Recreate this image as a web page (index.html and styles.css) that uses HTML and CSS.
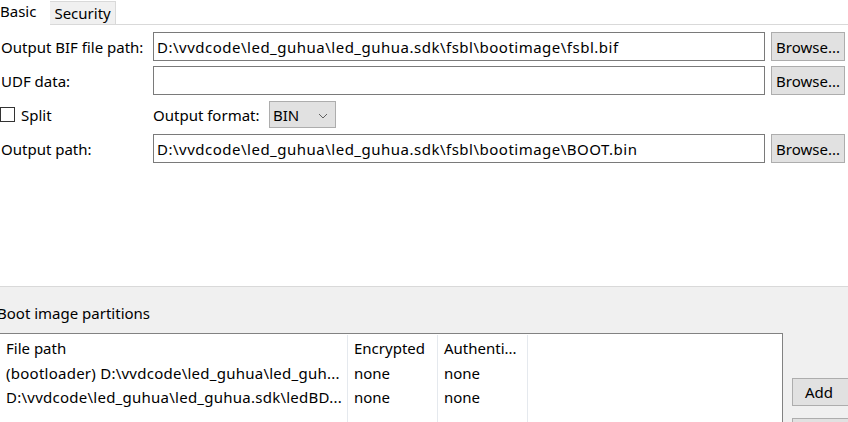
FILE: index.html
```html
<!DOCTYPE html>
<html>
<head>
<meta charset="utf-8">
<link rel="stylesheet" href="styles.css">
</head>
<body>
<div class="tabs">
  <div class="tab active">Basic</div>
  <div class="tab">Security</div>
</div>
<div class="panel">
  <div class="form">
    <div class="label">Output BIF file path:</div>
    <div class="input">D:\vvdcode\led_guhua\led_guhua.sdk\fsbl\bootimage\fsbl.bif</div>
    <div class="btn">Browse...</div>

    <div class="label">UDF data:</div>
    <div class="input"></div>
    <div class="btn">Browse...</div>

    <div class="label check"><span class="box"></span>Split</div>
    <div class="fmt"><span class="flabel">Output format:</span><span class="select">BIN<svg class="chev" width="10" height="6" viewBox="0 0 10 6"><path d="M1 1 L5 5 L9 1" fill="none" stroke="#606060" stroke-width="1"/></svg></span></div>
    <div></div>

    <div class="label">Output path:</div>
    <div class="input">D:\vvdcode\led_guhua\led_guhua.sdk\fsbl\bootimage\BOOT.bin</div>
    <div class="btn">Browse...</div>
  </div>
</div>
<div class="lower">
  <div class="group">Boot image partitions</div>
  <div class="bottom">
    <div class="table">
      <div class="row head">
        <div class="c c1">File path</div>
        <div class="c c2">Encrypted</div>
        <div class="c c3">Authenti...</div>
      </div>
      <div class="row">
        <div class="c c1 path">(bootloader) D:\vvdcode\led_guhua\led_guh...</div>
        <div class="c c2">none</div>
        <div class="c c3">none</div>
      </div>
      <div class="row">
        <div class="c c1 path">D:\vvdcode\led_guhua\led_guhua.sdk\ledBD...</div>
        <div class="c c2">none</div>
        <div class="c c3">none</div>
      </div>
      <div class="row filler">
        <div class="c c1"></div>
        <div class="c c2"></div>
        <div class="c c3"></div>
      </div>
    </div>
    <div class="side">
      <div class="sbtn">Add</div>
      <div class="sbtn"></div>
    </div>
  </div>
</div>
</body>
</html>
```

FILE: styles.css
```css
html, body {
  margin: 0;
  padding: 0;
  width: 848px;
  height: 422px;
  overflow: hidden;
  background: #ffffff;
  font-family: "Noto Sans", "Open Sans", sans-serif;
  font-size: 15px;
  color: #000;
}

.tabs {
  height: 24px;
  border-bottom: 1px solid #d9d9d9;
  display: flex;
  align-items: flex-end;
  background: #ffffff;
}

.tab {
  height: 22px;
  line-height: 22px;
  padding: 0 4px 0 4px;
  background: #f0f0f0;
  border: 1px solid #d9d9d9;
  border-bottom: none;
  margin-left: -1px;
}

.tab.active {
  background: #ffffff;
  height: 25px;
  line-height: 22px;
  margin-bottom: -1px;
  margin-left: -2px;
  padding: 0 13px 0 1px;
  border-color: #ffffff;
  position: relative;
}

.panel {
  height: 261px;
  padding-top: 7px;
  box-sizing: border-box;
  background: #ffffff;
}

.form {
  display: grid;
  grid-template-columns: 147px 612px 74px;
  grid-auto-rows: 29px;
  column-gap: 6px;
  row-gap: 5px;
}

.label {
  display: flex;
  align-items: center;
  padding-left: 1px;
  white-space: nowrap;
}

.check .box {
  width: 13px;
  height: 13px;
  border: 1px solid #333;
  background: #fff;
  margin-left: -1px;
  margin-right: 6px;
}

.input {
  border: 1px solid #7a7a7a;
  background: #fff;
  display: flex;
  align-items: center;
  padding-left: 3px;
  white-space: nowrap;
  overflow: hidden;
  letter-spacing: 0.5px;
}

.btn {
  border: 1px solid #adadad;
  background: #e1e1e1;
  display: flex;
  align-items: center;
  justify-content: center;
}

.fmt {
  display: flex;
  align-items: center;
}

.flabel {
  width: 116px;
}

.select {
  width: 67px;
  height: 27px;
  box-sizing: border-box;
  border: 1px solid #adadad;
  background: #e1e1e1;
  display: flex;
  align-items: center;
  padding-left: 3px;
  position: relative;
}

.chev {
  position: absolute;
  right: 7px;
  top: 11px;
}

.lower {
  height: 136px;
  background: #f0f0f0;
  border-top: 1px solid #d9d9d9;
}

.group {
  height: 46px;
  line-height: 52px;
  margin-left: -3px;
}

.bottom {
  display: flex;
  align-items: flex-start;
}

.table {
  flex: 0 0 auto;
  width: 784px;
  height: 100px;
  margin-left: -1px;
  box-sizing: border-box;
  border: 1px solid #828282;
  background: #ffffff;
  padding-top: 1px;
  display: flex;
  flex-direction: column;
}

.row {
  display: flex;
  height: 24px;
}

.row.head {
  height: 26px;
}

.row.filler {
  flex: 1;
}

.c {
  box-sizing: border-box;
  padding-left: 6px;
  white-space: nowrap;
  overflow: hidden;
  display: flex;
  align-items: center;
  border-right: 1px solid #e5e9ee;
}

.c.path {
  letter-spacing: 0.25px;
}

.c1 { width: 348px; }
.c2 { width: 90px; }
.c3 { width: 90px; }

.side {
  flex: 0 0 auto;
  display: flex;
  flex-direction: column;
  gap: 12px;
  margin-left: 9px;
  padding-top: 45px;
}

.sbtn {
  width: 70px;
  height: 28px;
  box-sizing: border-box;
  border: 1px solid #adadad;
  background: #e1e1e1;
  padding-left: 12px;
  display: flex;
  align-items: center;
}
```
